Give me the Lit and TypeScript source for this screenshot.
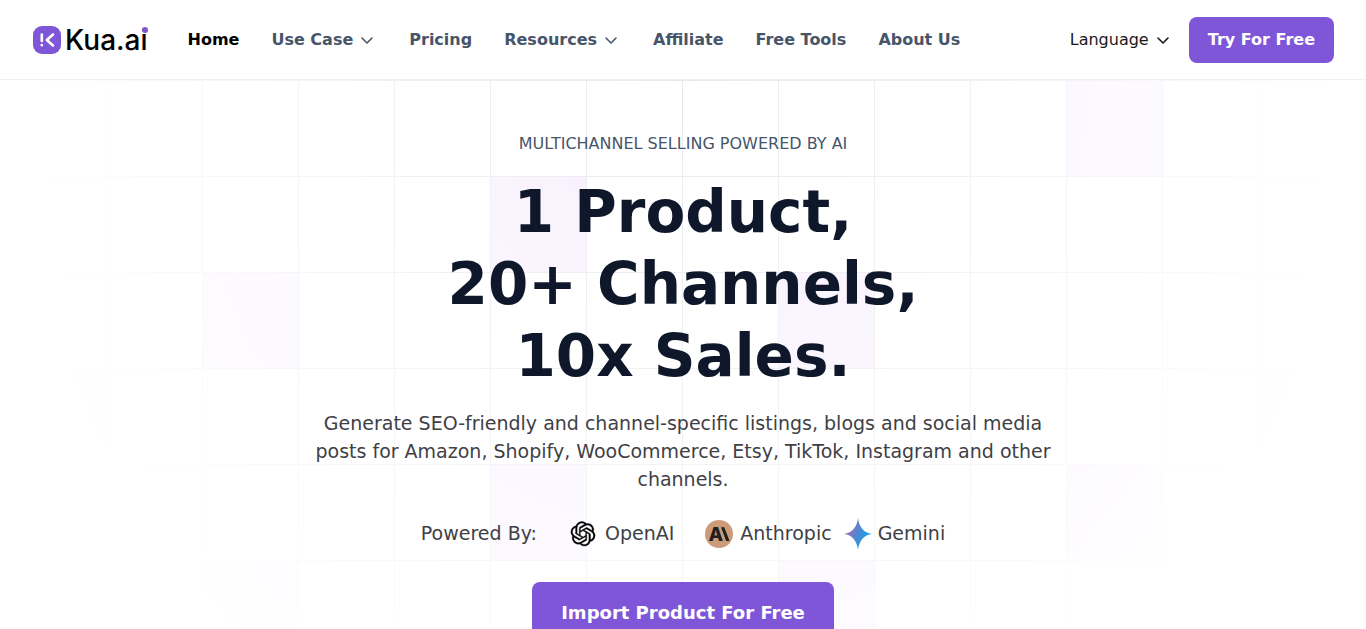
import { LitElement, html, css, svg } from "lit";
import { customElement } from "lit/decorators.js";

const chevron = html`<svg class="chevron" viewBox="0 0 20 20" aria-hidden="true">
  <path d="M5 8 10 13l5-5" fill="none" stroke="currentColor" stroke-width="1.600" stroke-linecap="round" stroke-linejoin="round" />
</svg>`;

const navItems = [
  { label: "Home", current: true },
  { label: "Use Case", menu: true },
  { label: "Pricing" },
  { label: "Resources", menu: true },
  { label: "Affiliate" },
  { label: "Free Tools" },
  { label: "About Us" },
];

// Tinted squares of the backdrop, as column and row of the 96px grid.
// Column 0 starts at the centre of the page.
const tiles = [
  [-8, 0], [4, 0], [-2, 1], [-5, 2], [1, 2], [-7, 3], [6, 3], [-2, 4], [4, 4], [-5, 5], [1, 5],
];

@customElement("kua-backdrop")
export class KuaBackdrop extends LitElement {
  static styles = css`
    :host {
      display: block;
      -webkit-mask-image: radial-gradient(ellipse 50% 760px at 50% 0, #000, transparent);
      mask-image: radial-gradient(ellipse 50% 760px at 50% 0, #000, transparent);
    }
    svg { display: block; width: 100%; height: 100%; }
    .grid { fill: none; stroke: #e7e7ee; }
    .tile { fill: #f7effe; }
  `;

  render() {
    return html`<svg aria-hidden="true">
      <defs>
        <pattern id="cells" width="96" height="96" patternUnits="userSpaceOnUse">
          <path class="grid" d="M.5 96V.5H96" />
        </pattern>
      </defs>
      <svg x="50%" overflow="visible">
        ${tiles.map(([col, row]) => svg`<rect class="tile" x=${col * 96} y=${row * 96} width="96" height="96" />`)}
        <rect x="-1920" width="3840" height="1920" transform="translate(-1 0)" fill="url(#cells)" />
      </svg>
    </svg>`;
  }
}

@customElement("app-root")
export class AppRoot extends LitElement {
  static styles = css`
    :host {
      display: block;
      height: 100vh;
      overflow-y: auto;
      scrollbar-width: none;
      background: #fff;
      color: #3f3f46;
      font: 16px/24px "DejaVu Sans", sans-serif;
    }
    * { box-sizing: border-box; }
    a { color: inherit; text-decoration: none; }
    button { font: inherit; color: inherit; border: 0; padding: 0; background: none; cursor: pointer; }

    .header {
      display: flex;
      align-items: center;
      padding: 17px 32px 16px;
      border-bottom: 1px solid #f1f1f5;
      background: #fff;
    }
    .brand {
      display: flex;
      align-items: center;
      gap: 3px;
      color: #000;
      font: 500 28px/32px Inter, sans-serif;
    }
    .brand-mark { width: 30px; height: 30px; }
    .brand-name { position: relative; }
    .brand-dot {
      position: absolute;
      top: 3px;
      right: 0;
      width: 6px;
      height: 6px;
      border-radius: 50%;
      background: #8056d9;
    }
    .nav {
      display: flex;
      gap: 32px;
      margin-left: 40px;
      font-weight: 700;
      color: #475569;
    }
    .item { display: flex; align-items: center; gap: 4px; white-space: nowrap; }
    .current { color: #000; }
    .chevron { width: 20px; height: 20px; }
    .actions { display: flex; align-items: center; gap: 16px; margin-left: auto; }
    .language { color: #18181b; }
    .primary {
      display: block;
      border-radius: 8px;
      background: #8056d9;
      color: #fff;
      font-weight: 700;
      white-space: nowrap;
    }
    .try { padding: 11px 19px; }

    .hero { position: relative; overflow: hidden; padding: 52px 32px 64px; }
    .backdrop { position: absolute; inset: 0; }
    .content {
      position: relative;
      display: flex;
      flex-direction: column;
      align-items: center;
      max-width: 768px;
      margin: 0 auto;
      text-align: center;
    }
    .eyebrow { margin: 0; color: #475569; }
    .title { margin: 20px 0 0; color: #0f172a; font-size: 58px; line-height: 72px; font-weight: 700; }
    .line { display: block; }
    .lead { margin: 17px 0 0; font-size: 19px; line-height: 28px; }
    .powered {
      display: flex;
      align-items: center;
      margin-top: 24px;
      font-size: 19px;
      line-height: 32px;
    }
    .models { display: flex; align-items: center; margin: 0; padding: 0; list-style: none; }
    .model { display: flex; align-items: center; gap: 6px; }
    .openai { gap: 8px; margin: 0 30px 0 32px; }
    .gemini { gap: 4px; margin-left: 10px; }
    .icon-openai { width: 28px; height: 28px; }
    .icon-anthropic { width: 30px; height: 30px; }
    .icon-gemini { width: 32px; height: 32px; }
    .cta { margin-top: 33px; padding: 19px 29px; font-size: 18px; }
  `;

  render() {
    return html`
      <header class="header">
        <a class="brand" href="#" aria-label="Kua.ai">
          <svg class="brand-mark" viewBox="0 0 30 30" aria-hidden="true">
            <rect x="1" y="1" width="28" height="28" rx="9" fill="#8056d9" />
            <path d="M9.800 9.500v6.500M9.800 20v.200" fill="none" stroke="#fff" stroke-width="2.600" stroke-linecap="round" />
            <path d="M21 9.500 14.800 15l6.200 5.500" fill="none" stroke="#fff" stroke-width="2.600" stroke-linecap="round" stroke-linejoin="round" />
          </svg>
          <span class="brand-name">Kua.ai<span class="brand-dot"></span></span>
        </a>
        <nav class="nav" aria-label="Main">
          ${navItems.map((item) =>
            item.menu
              ? html`<button class="item" type="button" aria-haspopup="true">${item.label}${chevron}</button>`
              : html`<a class="item ${item.current ? "current" : ""}" href="#">${item.label}</a>`
          )}
        </nav>
        <div class="actions">
          <button class="item language" type="button" aria-haspopup="true">Language${chevron}</button>
          <a class="primary try" href="#">Try For Free</a>
        </div>
      </header>
      <main class="hero">
        <kua-backdrop class="backdrop"></kua-backdrop>
        <div class="content">
          <p class="eyebrow">MULTICHANNEL SELLING POWERED BY AI</p>
          <h1 class="title">
            <span class="line">1 Product,</span>
            <span class="line">20+ Channels,</span>
            <span class="line">10x Sales.</span>
          </h1>
          <p class="lead">
            Generate SEO-friendly and channel-specific listings, blogs and social media posts for
            Amazon, Shopify, WooCommerce, Etsy, TikTok, Instagram and other channels.
          </p>
          <div class="powered">
            <span>Powered By:</span>
            <ul class="models">
              <li class="model openai">
                <svg class="icon-openai" viewBox="-1.700 -2.500 27.400 27.400" aria-hidden="true">
                  <path fill="#000" stroke="#000" stroke-width="0.300" d="M22.2819 9.8211a5.9847 5.9847 0 0 0-.5157-4.9108 6.0462 6.0462 0 0 0-6.5098-2.9A6.0651 6.0651 0 0 0 4.9807 4.1818a5.9847 5.9847 0 0 0-3.9977 2.9 6.0462 6.0462 0 0 0 .7427 7.0966 5.98 5.98 0 0 0 .511 4.9107 6.051 6.051 0 0 0 6.5146 2.9001A5.9847 5.9847 0 0 0 13.2599 24a6.0557 6.0557 0 0 0 5.7718-4.2058 5.9894 5.9894 0 0 0 3.9977-2.9001 6.0557 6.0557 0 0 0-.7475-7.0729zm-9.022 12.6081a4.4755 4.4755 0 0 1-2.8764-1.0408l.1419-.0804 4.7783-2.7582a.7948.7948 0 0 0 .3927-.6813v-6.7369l2.02 1.1686a.071.071 0 0 1 .038.052v5.5826a4.504 4.504 0 0 1-4.4945 4.4944zm-9.6607-4.1254a4.4708 4.4708 0 0 1-.5346-3.0137l.142.0852 4.783 2.7582a.7712.7712 0 0 0 .7806 0l5.8428-3.3685v2.3324a.0804.0804 0 0 1-.0332.0615L9.74 19.9502a4.4992 4.4992 0 0 1-6.1408-1.6464zM2.3408 7.8956a4.485 4.485 0 0 1 2.3655-1.9728V11.6a.7664.7664 0 0 0 .3879.6765l5.8144 3.3543-2.0201 1.1685a.0757.0757 0 0 1-.071 0l-4.8303-2.7865A4.504 4.504 0 0 1 2.3408 7.872zm16.5963 3.8558L13.1038 8.364 15.1192 7.2a.0757.0757 0 0 1 .071 0l4.8303 2.7913a4.4944 4.4944 0 0 1-.6765 8.1042v-5.6772a.79.79 0 0 0-.407-.667zm2.0107-3.0231l-.142-.0852-4.7735-2.7818a.7759.7759 0 0 0-.7854 0L9.409 9.2297V6.8974a.0662.0662 0 0 1 .0284-.0615l4.8303-2.7866a4.4992 4.4992 0 0 1 6.6802 4.66zM8.3065 12.863l-2.02-1.1638a.0804.0804 0 0 1-.038-.0567V6.0742a4.4992 4.4992 0 0 1 7.3757-3.4537l-.142.0805L8.704 5.459a.7948.7948 0 0 0-.3927.6813zm1.0976-2.3654l2.602-1.4998 2.6069 1.4998v2.9994l-2.5974 1.4997-2.6067-1.4997Z" />
                </svg>
                OpenAI
              </li>
              <li class="model">
                <svg class="icon-anthropic" viewBox="0 -1 30 30" aria-hidden="true">
                  <circle cx="15" cy="15" r="14" fill="#cc9b7a" />
                  <text x="4.500" y="22" fill="#1f1f1e" font-family="Inter" font-weight="800" font-size="19">A</text>
                  <path d="M17 8.200h3.300L25.500 22h-3.300z" fill="#1f1f1e" />
                </svg>
                Anthropic
              </li>
              <li class="model gemini">
                <svg class="icon-gemini" viewBox="0 -1 32 32" aria-hidden="true">
                  <defs>
                    <linearGradient id="spark" x1="0" y1="0.300" x2="1" y2="0.700">
                      <stop offset="0.100" stop-color="#a16bb8" />
                      <stop offset="0.450" stop-color="#5684d1" />
                      <stop offset="0.800" stop-color="#1ba1e3" />
                    </linearGradient>
                  </defs>
                  <path fill="url(#spark)" d="M16 0c1 8.500 5.500 15 14 16-8.500 1-13 7.500-14 16-1-8.500-5.500-15-14-16 8.500-1 13-7.500 14-16z" />
                </svg>
                Gemini
              </li>
            </ul>
          </div>
          <a class="primary cta" href="#">Import Product For Free</a>
        </div>
      </main>
    `;
  }
}
